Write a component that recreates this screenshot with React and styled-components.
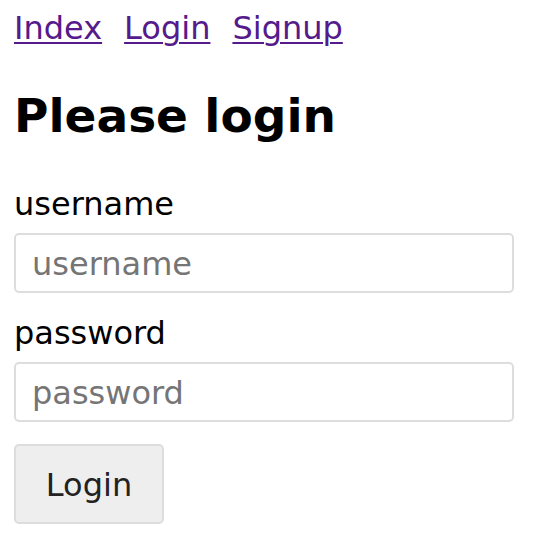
import React from "react";
import styled, { createGlobalStyle } from "styled-components";

const Global = createGlobalStyle`
  html, body { margin: 0; padding: 0; background: #fff; }
  body { font-family: "DejaVu Sans", Verdana, sans-serif; color: #000; }
`;

const Page = styled.div`
  display: flex;
  flex-direction: column;
  align-items: flex-start;
  padding: 10px 14px 0;
`;

const Nav = styled.nav`
  display: flex;
  gap: 22px;
  font-size: 32px;
  line-height: 37px;
`;

const NavLink = styled.a`
  color: #551a8b;
  text-decoration: underline;
  text-underline-offset: 3px;
  text-decoration-thickness: 2px;
`;

const Title = styled.h1`
  margin: 41px 0 0;
  font-size: 47px;
  line-height: 56px;
  font-weight: bold;
`;

const Form = styled.form`
  display: flex;
  flex-direction: column;
  align-items: flex-start;
  align-self: stretch;
`;

const Label = styled.label`
  margin-top: ${(p) => (p.$first ? "42px" : "22px")};
  font-size: 32px;
  line-height: 37px;
`;

const Input = styled.input`
  box-sizing: border-box;
  margin-top: 10px;
  width: 500px;
  height: 60px;
  padding: 2px 16px 0;
  border: 2px solid #dddddd;
  border-radius: 5px;
  font-family: "DejaVu Sans", Verdana, sans-serif;
  font-size: 32px;
  color: #000;
  outline: none;
  &::placeholder { color: #757575; }
`;

const Button = styled.button`
  box-sizing: border-box;
  margin-top: 22px;
  width: 150px;
  height: 80px;
  padding: 2px 0 0;
  border: 2px solid #dddddd;
  border-radius: 5px;
  background: #eeeeee;
  color: #222;
  font-family: "DejaVu Sans", Verdana, sans-serif;
  font-size: 32px;
  line-height: 37px;
`;

export default function App() {
  return (
    <>
      <Global />
      <Page>
        <Nav>
          <NavLink href="#">Index</NavLink>
          <NavLink href="#">Login</NavLink>
          <NavLink href="#">Signup</NavLink>
        </Nav>
        <Title>Please login</Title>
        <Form onSubmit={(e) => e.preventDefault()}>
          <Label $first htmlFor="username">username</Label>
          <Input id="username" name="username" placeholder="username" />
          <Label htmlFor="password">password</Label>
          <Input id="password" name="password" type="password" placeholder="password" />
          <Button type="submit">Login</Button>
        </Form>
      </Page>
    </>
  );
}
